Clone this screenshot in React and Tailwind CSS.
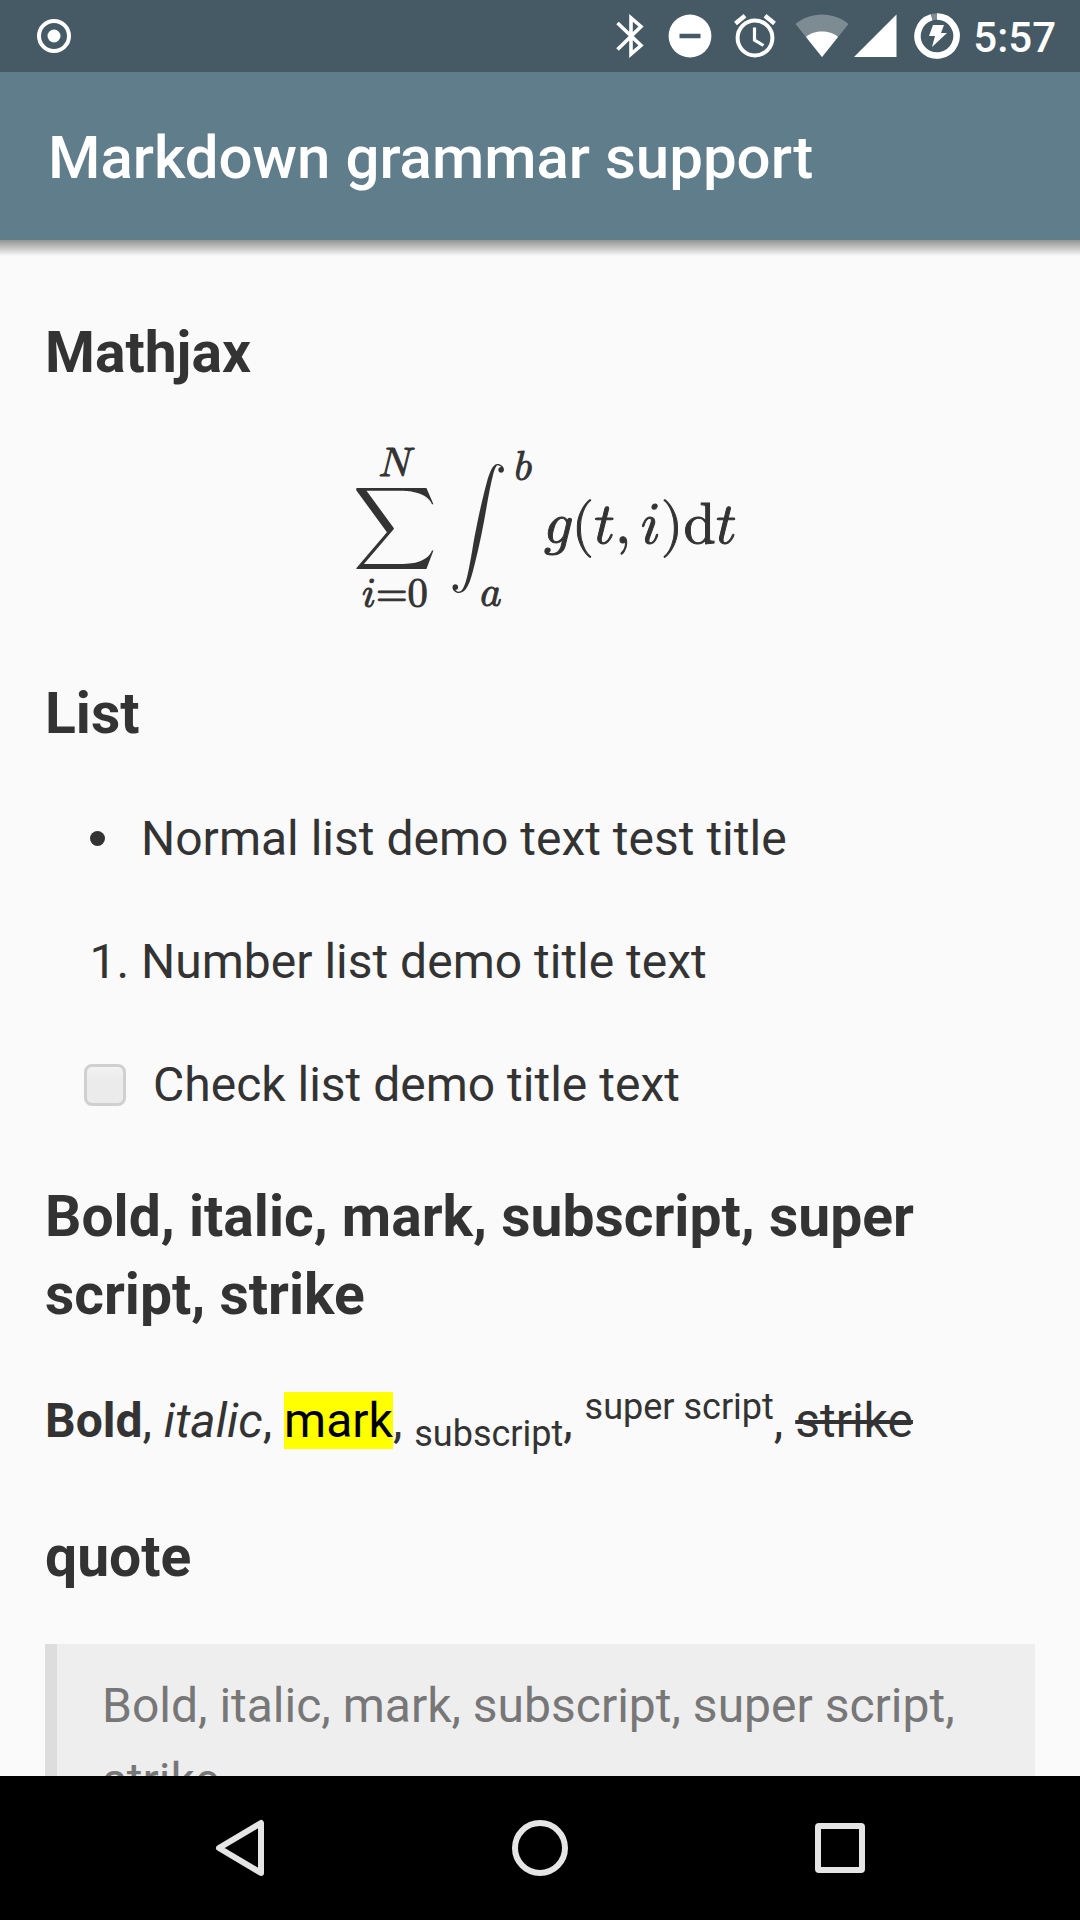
import React from "react";

function StatusBar() {
  return (
    <header className="flex h-18 shrink-0 items-center justify-between bg-[#455a64] pl-9 pr-6 text-white">
      <svg width="36" height="36" viewBox="0 0 36 36" fill="none" role="img" aria-label="Recording">
        <circle cx="18" cy="18" r="15" stroke="currentColor" strokeWidth="4" />
        <circle cx="18" cy="18" r="6.5" fill="currentColor" />
      </svg>
      <div className="flex items-center">
        <svg width="28" height="44" viewBox="0 0 28 44" fill="none" stroke="currentColor" strokeWidth="3.6" role="img" aria-label="Bluetooth">
          <path d="M1.500 9 25 31.500 15 40V4L25 12.500 1.500 35.500" />
        </svg>
        <svg className="ml-6" width="44" height="44" viewBox="0 0 44 44" role="img" aria-label="Do not disturb">
          <circle cx="22" cy="22" r="21.400" fill="currentColor" />
          <path d="M11.500 22h21" stroke="#455a64" strokeWidth="4.500" />
        </svg>
        <svg className="ml-[21px]" width="44" height="44" viewBox="0 0 44 44" fill="none" stroke="currentColor" role="img" aria-label="Alarm">
          <circle cx="22" cy="24" r="17.400" strokeWidth="4" />
          <path d="M2.500 9.500 12 1.800M41.500 9.500 32 1.800" strokeWidth="4.400" />
          <path d="M21.500 13.500V26l9 5.500" strokeWidth="3.200" />
        </svg>
        <svg className="ml-[18px]" width="54" height="44" viewBox="0 0 54 44" fill="currentColor" role="img" aria-label="Wi-Fi">
          <path d="M27 43 .5 10C8 4 17 .5 27 .5S46 4 53.500 10Z" opacity=".3" />
          <path d="M27 43 11 23c4.500-4 10-5.500 16-5.500S38.500 19 43 23Z" />
        </svg>
        <svg className="ml-1" width="44" height="44" viewBox="0 0 44 44" fill="currentColor" role="img" aria-label="Mobile signal">
          <path d="M43.500 .5V43H1Z" />
        </svg>
        <svg className="ml-[17px]" width="46" height="46" viewBox="0 0 46 46" fill="none" role="img" aria-label="Battery charging">
          <circle cx="23" cy="23" r="19.500" stroke="currentColor" strokeWidth="6.400" opacity=".3" />
          <path d="M23 3.500A19.500 19.500 0 1 1 17.500 4.300" stroke="currentColor" strokeWidth="6.400" />
          <path d="M19 12h11l-3 8h6L18 34l3-11h-6Z" fill="currentColor" />
        </svg>
        <time className="ml-[13px] pt-1 text-[42px] leading-none font-medium">5:57</time>
      </div>
    </header>
  );
}

function Formula() {
  return (
    <math display="block" className="mt-14 pr-1 text-[58px] font-['Latin_Modern_Math','Liberation_Serif',serif] [-webkit-text-stroke:1px_#333]">
      <mrow>
        <munderover>
          <mo>∑</mo>
          <mrow><mi>i</mi><mo lspace="0" rspace="0">=</mo><mn>0</mn></mrow>
          <mi>N</mi>
        </munderover>
        <msubsup>
          <mo lspace="0.05em" rspace="0.08em">∫</mo>
          <mrow><mspace width="0.18em" /><mi>a</mi></mrow>
          <mrow><mspace width="0.18em" /><mi>b</mi></mrow>
        </msubsup>
        <mi>g</mi>
        <mo stretchy="false">(</mo>
        <mi>t</mi>
        <mo>,</mo>
        <mi>i</mi>
        <mo stretchy="false">)</mo>
        <mi mathvariant="normal">d</mi>
        <mi>t</mi>
      </mrow>
    </math>
  );
}

function Heading({ children }) {
  return <h3 className="text-[57px] leading-[78px] font-bold">{children}</h3>;
}

function NavBar() {
  const button = "flex h-24 w-24 items-center justify-center";
  return (
    <nav className="flex h-36 shrink-0 items-center justify-center gap-51 bg-black text-[#e5e5e5]">
      <button className={button} aria-label="Back">
        <svg width="58" height="58" viewBox="0 0 58 58" fill="none" stroke="currentColor" strokeWidth="6" strokeLinejoin="round">
          <path d="M50 4v50L8 29Z" />
        </svg>
      </button>
      <button className={button} aria-label="Home">
        <svg width="58" height="58" viewBox="0 0 58 58" fill="none" stroke="currentColor" strokeWidth="6">
          <circle cx="29" cy="29" r="25" />
        </svg>
      </button>
      <button className={button} aria-label="Recent apps">
        <svg width="58" height="58" viewBox="0 0 58 58" fill="none" stroke="currentColor" strokeWidth="6">
          <rect x="7" y="7" width="44" height="44" rx="1" />
        </svg>
      </button>
    </nav>
  );
}

export default function App() {
  return (
    <div className="flex h-screen flex-col overflow-hidden bg-[#fafafa] font-[Roboto,sans-serif] text-[#333]">
      <StatusBar />
      <div className="flex h-42 shrink-0 items-center bg-[#607d8b] px-12 pt-1 text-white">
        <h1 className="text-[60px] leading-[72px] font-medium">Markdown grammar support</h1>
      </div>
      <div className="h-4 shrink-0 bg-linear-to-b from-[#949494] to-[#fafafa]" />
      <main className="min-h-0 flex-1 overflow-hidden px-[45px] pt-[58px] text-[48px] leading-[75px]">
        <Heading>Mathjax</Heading>
        <Formula />
        <div className="mt-17"><Heading>List</Heading></div>
        <ul className="mt-12 pl-[45px]">
          <li className="flex items-center gap-9">
            <span className="h-[15px] w-[15px] rounded-full bg-[#333]" />
            Normal list demo text test title
          </li>
        </ul>
        <ol className="mt-12 list-decimal pl-24"><li>Number list demo title text</li></ol>
        <label className="mt-12 flex items-center pl-[39px]">
          <input type="checkbox" className="mr-[27px] h-[42px] w-[42px] appearance-none rounded-lg border-3 border-[#d0d0d0] bg-linear-to-b from-[#f3f3f3] to-[#ebebeb] to-35% checked:bg-[#607d8b]" />
          Check list demo title text
        </label>
        <div className="mt-14"><Heading>Bold, italic, mark, subscript, super script, strike</Heading></div>
        <p className="mt-[49px]">
          <b>Bold</b>, <i>italic</i>, <mark className="bg-[#ff0] text-black">mark</mark>, <sub className="text-[36px]">subscript</sub>, <sup className="text-[36px]">super script</sup>, <s>strike</s>
        </p>
        <div className="mt-15"><Heading>quote</Heading></div>
        <blockquote className="mt-12 border-l-12 border-[#ddd] bg-[#eee] px-[45px] py-6 text-[#777]">
          Bold, italic, mark, subscript, super script, strike
        </blockquote>
      </main>
      <NavBar />
    </div>
  );
}
